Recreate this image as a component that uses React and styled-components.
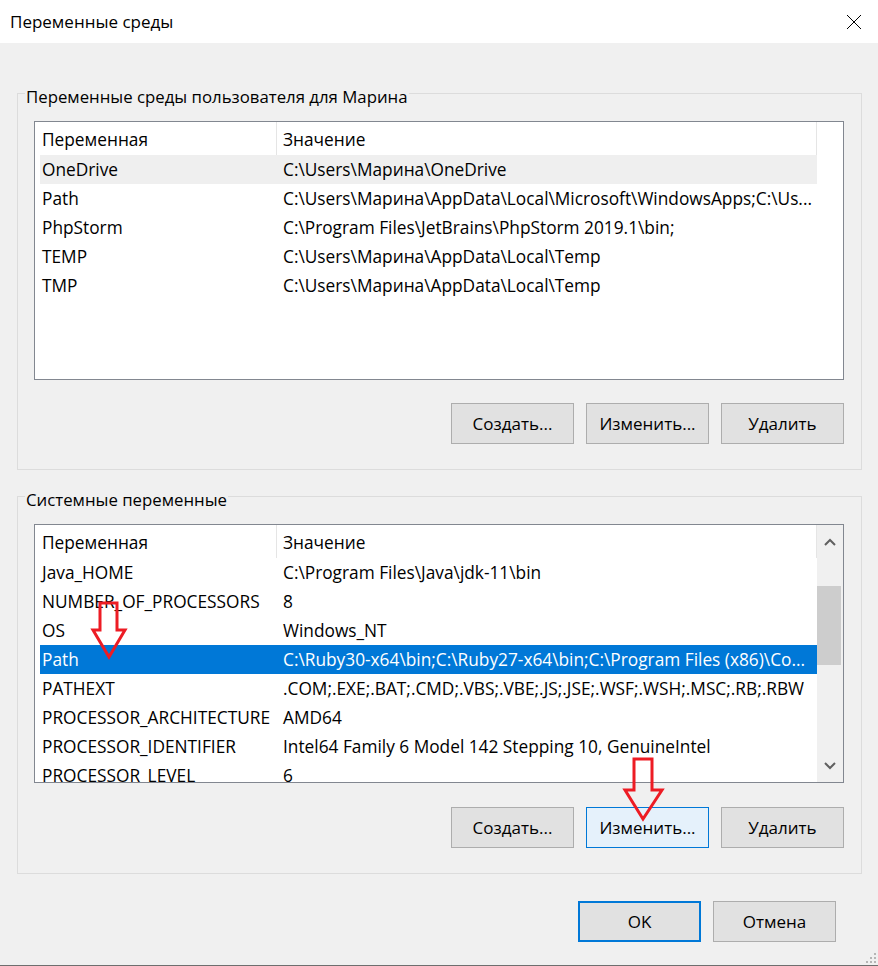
import React from "react";
import styled, { createGlobalStyle } from "styled-components";

const Global = createGlobalStyle`
  html, body { margin: 0; padding: 0; background: #f0f0f0; }
  * { box-sizing: border-box; }
`;

const FONT = `"Open Sans", "Noto Sans", "Liberation Sans", sans-serif`;

const Window = styled.div`
  position: relative;
  width: 878px;
  height: 966px;
  background: #f0f0f0;
  border-bottom: 1px solid #6e6e6e;
  font-family: ${FONT};
  font-size: 17px;
  color: #000;
  display: flex;
  flex-direction: column;
  overflow: hidden;
`;

const TitleBar = styled.div`
  height: 43px;
  background: #fff;
  display: flex;
  align-items: center;
  justify-content: space-between;
  padding: 0 16px 0 10px;
`;

const Title = styled.div`
  font-size: 17px;
  line-height: 22px;
`;

const Close = styled.div`
  width: 16px;
  height: 16px;
  display: flex;
  margin-top: 1px;
`;

const Body = styled.div`
  padding: 0 16px 0 17px;
  display: flex;
  flex-direction: column;
`;

const Group = styled.fieldset`
  margin: ${(p) => p.$mt}px 0 0 0;
  padding: 13px 17px 25px 7px;
  border: 1px solid #dcdcdc;
  min-width: 0;
`;

const Legend = styled.legend`
  padding: 8px 1px 0 1px;
  font-size: 16.8px;
  line-height: 22px;
`;

const Inner = styled.div`
  padding-left: 9px;
  display: flex;
  flex-direction: column;
`;

const ListView = styled.div`
  height: 259px;
  border: 1px solid #828790;
  background: #fff;
  display: flex;
  overflow: hidden;
  font-size: 17.3px;
`;

const ListContent = styled.div`
  flex: 1;
  min-width: 0;
  padding-left: 5px;
  display: flex;
  flex-direction: column;
  overflow: hidden;
`;

const HeaderRow = styled.div`
  height: 33px;
  display: flex;
  flex-shrink: 0;
`;

const HeaderCell = styled.div`
  ${(p) => (p.$name ? "width: 237px;" : "flex: 1;")}
  border-right: 1px solid #e5e5e5;
  padding: 3px 0 0 ${(p) => (p.$name ? 2 : 6)}px;
  line-height: 30px;
  white-space: nowrap;
`;

const Row = styled.div`
  height: 29px;
  flex-shrink: 0;
  display: flex;
  background: ${(p) => (p.$selected ? "#0078d7" : p.$hover ? "#efefef" : "transparent")};
  color: ${(p) => (p.$selected ? "#fff" : "#000")};
`;

const Cell = styled.div`
  ${(p) => (p.$name ? "width: 237px;" : "flex: 1; min-width: 0;")}
  padding-left: ${(p) => (p.$name ? 2 : 6)}px;
  line-height: 30px;
  white-space: nowrap;
  overflow: hidden;
  text-overflow: ellipsis;
`;

const Gutter = styled.div`
  width: 26px;
  flex-shrink: 0;
`;

const ScrollBar = styled.div`
  width: 26px;
  flex-shrink: 0;
  background: #f0f0f0;
  display: flex;
  flex-direction: column;
`;

const ScrollArrow = styled.div`
  height: 33px;
  display: flex;
  align-items: center;
  justify-content: center;
  flex-shrink: 0;
`;

const ScrollTrack = styled.div`
  flex: 1;
  display: flex;
  flex-direction: column;
`;

const Thumb = styled.div`
  width: 24px;
  background: #cdcdcd;
`;

const ButtonRow = styled.div`
  display: flex;
  justify-content: flex-end;
  gap: 12px;
  margin-top: ${(p) => p.$mt}px;
`;

const Button = styled.div`
  width: 123px;
  height: 41px;
  display: flex;
  align-items: center;
  justify-content: center;
  background: ${(p) => (p.$hot ? "#e5f1fb" : "#e1e1e1")};
  border: ${(p) => (p.$default ? "2px solid #0078d7" : p.$hot ? "1px solid #0078d7" : "1px solid #adadad")};
  font-size: 17px;
  white-space: nowrap;
`;

const Footer = styled.div`
  display: flex;
  justify-content: flex-end;
  gap: 12px;
  margin-top: 27px;
  padding-right: 42px;
`;

const Overlay = styled.svg`
  position: absolute;
  left: 0;
  top: 0;
  width: 878px;
  height: 966px;
  pointer-events: none;
`;

const userVars = [
  ["OneDrive", "C:\\Users\\Марина\\OneDrive", "hover"],
  ["Path", "C:\\Users\\Марина\\AppData\\Local\\Microsoft\\WindowsApps;C:\\Us..."],
  ["PhpStorm", "C:\\Program Files\\JetBrains\\PhpStorm 2019.1\\bin;"],
  ["TEMP", "C:\\Users\\Марина\\AppData\\Local\\Temp"],
  ["TMP", "C:\\Users\\Марина\\AppData\\Local\\Temp"],
];

const sysVars = [
  ["Java_HOME", "C:\\Program Files\\Java\\jdk-11\\bin"],
  ["NUMBER_OF_PROCESSORS", "8"],
  ["OS", "Windows_NT"],
  ["Path", "C:\\Ruby30-x64\\bin;C:\\Ruby27-x64\\bin;C:\\Program Files (x86)\\Co...", "selected"],
  ["PATHEXT", ".COM;.EXE;.BAT;.CMD;.VBS;.VBE;.JS;.JSE;.WSF;.WSH;.MSC;.RB;.RBW"],
  ["PROCESSOR_ARCHITECTURE", "AMD64"],
  ["PROCESSOR_IDENTIFIER", "Intel64 Family 6 Model 142 Stepping 10, GenuineIntel"],
  ["PROCESSOR_LEVEL", "6"],
];

const Chevron = ({ up }) => (
  <svg width="12" height="8" viewBox="0 0 12 8">
    <path
      d={up ? "M1 7 L6 2 L11 7" : "M1 1 L6 6 L11 1"}
      fill="none"
      stroke="#606060"
      strokeWidth="2"
    />
  </svg>
);

const VarList = ({ rows, scroll }) => (
  <ListView>
    <ListContent>
      <HeaderRow>
        <HeaderCell $name>Переменная</HeaderCell>
        <HeaderCell>Значение</HeaderCell>
      </HeaderRow>
      {rows.map(([n, v, s], i) => (
        <Row key={i} $selected={s === "selected"} $hover={s === "hover"}>
          <Cell $name>{n}</Cell>
          <Cell>{v}</Cell>
        </Row>
      ))}
    </ListContent>
    {scroll ? (
      <ScrollBar>
        <ScrollArrow>
          <Chevron up />
        </ScrollArrow>
        <ScrollTrack>
          <Thumb style={{ marginTop: 28, height: 79 }} />
        </ScrollTrack>
        <ScrollArrow>
          <Chevron />
        </ScrollArrow>
      </ScrollBar>
    ) : (
      <Gutter />
    )}
  </ListView>
);

export default function App() {
  return (
    <>
      <Global />
      <Window>
        <TitleBar>
          <Title>Переменные среды</Title>
          <Close>
            <svg width="16" height="16" viewBox="0 0 16 16">
              <path d="M1 1 L15 15 M15 1 L1 15" stroke="#000" strokeWidth="1" />
            </svg>
          </Close>
        </TitleBar>
        <Body>
          <Group $mt={35}>
            <Legend>Переменные среды пользователя для Марина</Legend>
            <Inner>
              <VarList rows={userVars} />
              <ButtonRow $mt={23}>
                <Button>Создать...</Button>
                <Button>Изменить...</Button>
                <Button>Удалить</Button>
              </ButtonRow>
            </Inner>
          </Group>
          <Group $mt={11}>
            <Legend>Системные переменные</Legend>
            <Inner>
              <VarList rows={sysVars} scroll />
              <ButtonRow $mt={24}>
                <Button>Создать...</Button>
                <Button $hot>Изменить...</Button>
                <Button>Удалить</Button>
              </ButtonRow>
            </Inner>
          </Group>
        </Body>
        <Footer>
          <Button $default>OK</Button>
          <Button>Отмена</Button>
        </Footer>
        <Overlay viewBox="0 0 878 966">
          <path
            d="M100 603 L117 603 L117 630 L125 630 L109 657 L93 630 L100 630 Z"
            fill="none"
            stroke="#ed1c24"
            strokeWidth="3"
            strokeLinejoin="miter"
          />
          <path
            d="M634 759 L652 759 L652 790 L662 790 L643 819 L625 790 L634 790 Z"
            fill="none"
            stroke="#ed1c24"
            strokeWidth="3"
            strokeLinejoin="miter"
          />
          {[
            [874, 961],
            [870, 961],
            [866, 961],
            [874, 957],
            [870, 957],
            [874, 953],
          ].map(([x, y], i) => (
            <rect key={i} x={x} y={y} width="2" height="2" fill="#b5b5b5" />
          ))}
        </Overlay>
      </Window>
    </>
  );
}
